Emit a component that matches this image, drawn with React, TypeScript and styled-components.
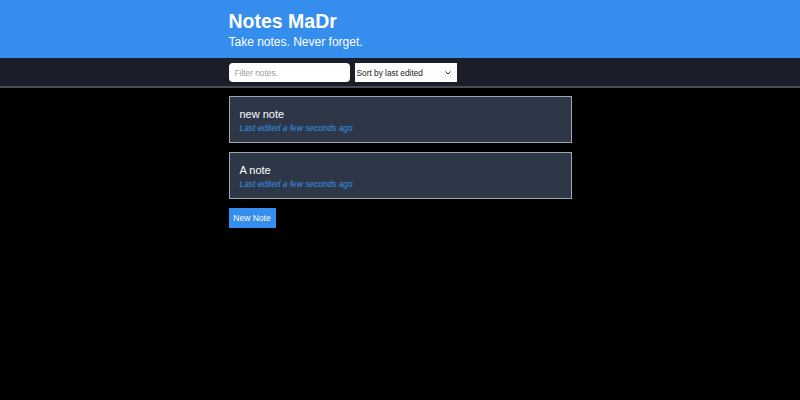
import React from "react";
import styled, { createGlobalStyle } from "styled-components";

const Global = createGlobalStyle`
  html, body { margin: 0; padding: 0; background: #000; }
  body { font-family: "Liberation Sans", Arial, sans-serif; }
`;

const Header = styled.header`
  background: #358ded;
  height: 58px;
  box-sizing: border-box;
  padding-top: 9px;
`;

const Container = styled.div`
  width: 343px;
  margin: 0 auto;
`;

const Title = styled.h1`
  margin: 0;
  color: #fff;
  font-size: 19.5px;
  font-weight: bold;
  line-height: 24px;
`;

const Subtitle = styled.p`
  margin: 0;
  color: #fff;
  font-size: 12px;
  line-height: 18px;
`;

const Toolbar = styled.div`
  background: #1b1e28;
  height: 28px;
  border-bottom: 2px solid #4a4c52;
  box-sizing: content-box;
`;

const ToolbarRow = styled(Container)`
  display: flex;
  align-items: flex-start;
  gap: 5px;
  padding-top: 5px;
`;

const FilterInput = styled.input`
  display: block;
  width: 121px;
  height: 19px;
  box-sizing: border-box;
  border: none;
  border-radius: 4px;
  padding: 0 6px;
  font-family: inherit;
  font-size: 8.3px;
  background: #fff;
  outline: none;
  &::placeholder { color: #9a9a9a; }
`;

const SelectWrap = styled.div`
  position: relative;
  width: 102px;
  height: 19px;
`;

const Select = styled.select`
  display: block;
  appearance: none;
  -webkit-appearance: none;
  width: 100%;
  height: 100%;
  box-sizing: border-box;
  border: none;
  border-radius: 0;
  margin: 0;
  padding: 0 2px;
  font-family: inherit;
  font-size: 8.3px;
  color: #222;
  background: #fff;
  outline: none;
`;

const Chevron = styled.svg`
  position: absolute;
  right: 6px;
  top: 8px;
  width: 6px;
  height: 4px;
  pointer-events: none;
`;

const Main = styled(Container)`
  padding-top: 8px;
  display: flex;
  flex-direction: column;
  gap: 9px;
  align-items: flex-start;
`;

const Card = styled.div`
  width: 100%;
  box-sizing: border-box;
  height: 47px;
  background: #2d3748;
  border: 1px solid #a0a6b0;
  padding: 10px 10px 0;
`;

const CardTitle = styled.div`
  color: #fff;
  font-size: 11px;
  line-height: 14px;
`;

const CardMeta = styled.div`
  color: #3a8ee6;
  font-size: 8.4px;
  font-style: italic;
  line-height: 12px;
  margin-top: 1px;
`;

const Button = styled.button`
  height: 20px;
  width: 47px;
  padding: 0;
  border: none;
  background: #358ded;
  color: #fff;
  font-family: inherit;
  font-size: 8.5px;
`;

const notes = [
  { title: "new note", meta: "Last edited a few seconds ago" },
  { title: "A note", meta: "Last edited a few seconds ago" },
];

export default function App() {
  return (
    <>
      <Global />
      <Header>
        <Container>
          <Title>Notes MaDr</Title>
          <Subtitle>Take notes. Never forget.</Subtitle>
        </Container>
      </Header>
      <Toolbar>
        <ToolbarRow>
          <FilterInput placeholder="Filter notes." />
          <SelectWrap>
            <Select defaultValue="edited">
              <option value="edited">Sort by last edited</option>
              <option value="created">Sort by last created</option>
              <option value="alpha">Sort alphabetically</option>
            </Select>
            <Chevron viewBox="0 0 6 4">
              <path d="M0.5 0.5 L3 3 L5.5 0.5" fill="none" stroke="#333" strokeWidth="1" />
            </Chevron>
          </SelectWrap>
        </ToolbarRow>
      </Toolbar>
      <Main>
        {notes.map((n) => (
          <Card key={n.title}>
            <CardTitle>{n.title}</CardTitle>
            <CardMeta>{n.meta}</CardMeta>
          </Card>
        ))}
        <Button>New Note</Button>
      </Main>
    </>
  );
}
